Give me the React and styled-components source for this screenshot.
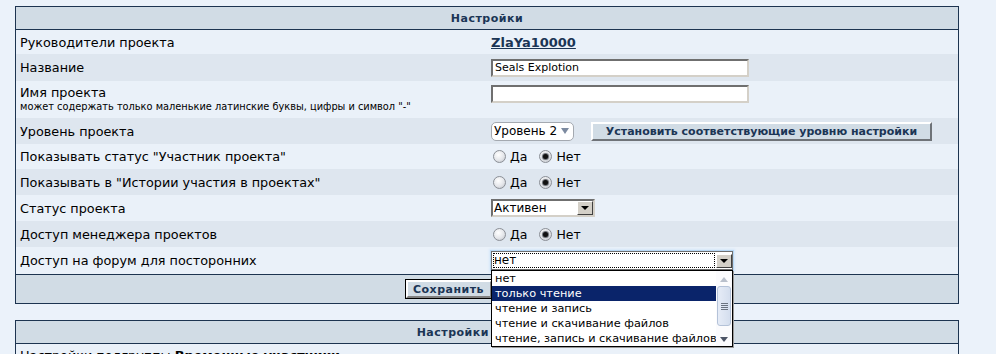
import React from 'react'
import styled, { createGlobalStyle, css } from 'styled-components'

const Global = createGlobalStyle`
    body {
        margin: 0;
        background: #ebf2fa;
        font-family: "DejaVu Sans", Verdana, sans-serif;
        color: #000;
    }
`

const Page = styled.div`
    padding: 6px 0 0 15px;
    display: flex;
    flex-direction: column;
    gap: 16px;
`

const Panel = styled.section`
    width: 944px;
    box-sizing: border-box;
    border: 1px solid #1d3450;
    border-bottom: ${p => (p.open ? 'none' : '1px solid #1d3450')};
`

const Header = styled.div`
    height: 22px;
    background: #d1dce5;
    border-bottom: 1px solid #1d3450;
    display: flex;
    align-items: center;
    justify-content: center;
    font-weight: bold;
    font-size: 11px;
    letter-spacing: 0.5px;
    color: #1b3555;
`

const Row = styled.div`
    display: grid;
    grid-template-columns: 475px 1fr;
    height: ${p => p.h}px;
    box-sizing: border-box;
    background: ${p => (p.alt ? '#dee6ef' : '#eaf1f9')};
    align-items: ${p => (p.top ? 'start' : 'center')};
    padding-top: ${p => (p.top ? 4 : 0)}px;
`

const Label = styled.div`
    padding-left: 4px;
    font-size: 12.8px;
    line-height: 15px;
    white-space: nowrap;
`

const Hint = styled.div`
    font-size: 9.8px;
    line-height: 13px;
`

const Value = styled.div`
    display: flex;
    align-items: center;
    gap: 17px;
    position: relative;
`

const UserLink = styled.a`
    font-size: 13px;
    font-weight: bold;
    color: #1b3555;
    text-decoration: underline;
`

const TextInput = styled.input`
    width: 258px;
    height: 18px;
    box-sizing: border-box;
    margin: 0;
    padding: 0 2px;
    border: 2px solid;
    border-color: #6f6f6f #d4d0c8 #d4d0c8 #6f6f6f;
    background: #fff;
    font-family: "DejaVu Sans", sans-serif;
    font-size: 11px;
    outline: none;
`

const RoundSelect = styled.div`
    width: 83px;
    height: 19px;
    box-sizing: border-box;
    border: 1px solid #a4a9b0;
    border-radius: 5px;
    background: #fff;
    display: flex;
    align-items: center;
    justify-content: space-between;
    padding: 0 4px 0 2px;
    font-size: 12px;
`

const SmallArrow = styled.span`
    width: 0;
    height: 0;
    border-left: 4px solid transparent;
    border-right: 4px solid transparent;
    border-top: 6px solid #7c8aa0;
`

const BlackArrow = styled.span`
    width: 0;
    height: 0;
    border-left: 4px solid transparent;
    border-right: 4px solid transparent;
    border-top: 4px solid #000;
`

const BevelButton = styled.button`
    height: ${p => p.h || 19}px;
    width: ${p => p.w}px;
    box-sizing: border-box;
    margin: 0;
    padding: 0;
    white-space: nowrap;
    background: #d1dce5;
    border: 2px solid;
    border-color: #ffffff #6f7378 #6f7378 #ffffff;
    ${p => p.framed && css`
        outline: 1px solid #000;
        border-color: #ffffff #808080 #808080 #ffffff;
    `}
    font-family: "DejaVu Sans", sans-serif;
    font-weight: bold;
    font-size: 11px;
    letter-spacing: ${p => (p.tight ? 0 : 0.5)}px;
    color: #1b3555;
`

const ClassicSelect = styled.div`
    width: ${p => p.w}px;
    height: ${p => p.h || 18}px;
    box-sizing: border-box;
    border: 2px solid;
    border-color: #6f6f6f #d4d0c8 #d4d0c8 #6f6f6f;
    background: #fff;
    display: flex;
    align-items: center;
    font-size: 12px;
    ${p => p.focused && css`
        border: 1px solid #6f6f6f;
        box-shadow: 0 0 0 1px #b6d7f5, 0 0 2px 2px #d6e8fa;
    `}
`

const SelectText = styled.span`
    flex: 1;
    padding-left: 1px;
    line-height: 14px;
    ${p => p.focused && css`
        margin: 0 1px;
        outline: 1px dotted #000;
        outline-offset: -1px;
        height: 15px;
    `}
`

const ArrowBox = styled.span`
    width: 16px;
    height: 14px;
    box-sizing: border-box;
    background: #d4d0c8;
    border: 1px solid;
    border-color: #fff #404040 #404040 #fff;
    display: flex;
    align-items: center;
    justify-content: center;
`

const Radios = styled.div`
    display: flex;
    align-items: center;
    padding-left: 2px;
    font-size: 12.5px;
`

const RadioItem = styled.label`
    display: flex;
    align-items: center;
    gap: 4px;
    margin-right: 12px;
`

const RadioDot = styled.span`
    width: 13px;
    height: 13px;
    box-sizing: border-box;
    border-radius: 50%;
    border: 1px solid #8b8f96;
    background: radial-gradient(circle at 40% 35%, #ffffff 0%, #e4e6ea 55%, #b9bdc4 100%);
    display: flex;
    align-items: center;
    justify-content: center;
    &::after {
        content: '';
        width: 5px;
        height: 5px;
        border-radius: 50%;
        background: ${p => (p.checked ? '#111' : 'transparent')};
        box-shadow: ${p => (p.checked ? '0 0 1px 1px #5d6168' : 'none')};
    }
`

const DropList = styled.div`
    position: absolute;
    left: 0;
    top: 19px;
    width: 242px;
    height: 77px;
    box-sizing: border-box;
    border: 1px solid #000;
    box-shadow: 1px 1px 0 #9a9a9a;
    background: #fff;
    display: flex;
    z-index: 5;
`

const Options = styled.div`
    flex: 1;
    min-width: 0;
    display: flex;
    flex-direction: column;
`

const Option = styled.div`
    height: 15px;
    line-height: 15px;
    padding-left: 3px;
    font-size: 11.3px;
    white-space: nowrap;
    overflow: hidden;
    background: ${p => (p.active ? '#0a246a' : 'transparent')};
    color: ${p => (p.active ? '#fff' : '#000')};
`

const Scroll = styled.div`
    width: 16px;
    flex: none;
    display: flex;
    flex-direction: column;
    align-items: center;
    background: #fbfbfd;
`

const ScrollArrow = styled.span`
    margin: 6px 0 4px;
    width: 0;
    height: 0;
    border-left: 4px solid transparent;
    border-right: 4px solid transparent;
    ${p => (p.up
        ? css`border-bottom: 5px solid #b9c0cc;`
        : css`border-top: 5px solid #4d5566; margin-top: auto;`)}
`

const Thumb = styled.div`
    width: 14px;
    height: 40px;
    box-sizing: border-box;
    border: 1px solid #b4c2d8;
    border-radius: 3px;
    background: linear-gradient(90deg, #e6ecf7, #d4deee);
    display: flex;
    flex-direction: column;
    align-items: center;
    justify-content: center;
    gap: 1px;
`

const Grip = styled.span`
    width: 7px;
    height: 1px;
    background: #6b7380;
`

const Footer = styled.div`
    height: 28px;
    border-top: 1px solid #1d3450;
    background: #d1dce5;
    display: flex;
    align-items: center;
    justify-content: center;
    padding-right: 77px;
`

const PlainRow = styled.div`
    padding: 4px 4px 0;
    font-size: 12.8px;
    background: #eaf1f9;
    height: 20px;
`

function Radio({ value }) {
    return (
        <Radios>
            <RadioItem><RadioDot checked={value === 'yes'} />Да</RadioItem>
            <RadioItem><RadioDot checked={value === 'no'} />Нет</RadioItem>
        </Radios>
    )
}

const forumOptions = [
    'нет',
    'только чтение',
    'чтение и запись',
    'чтение и скачивание файлов',
    'чтение, запись и скачивание файлов',
]

export default function App() {
    return (
        <Page>
            <Global />
            <Panel>
                <Header>Настройки</Header>
                <Row h={24}>
                    <Label>Руководители проекта</Label>
                    <Value><UserLink href="#">ZlaYa10000</UserLink></Value>
                </Row>
                <Row h={27} alt>
                    <Label>Название</Label>
                    <Value><TextInput defaultValue="Seals Explotion" /></Value>
                </Row>
                <Row h={37} top>
                    <Label>
                        Имя проекта
                        <Hint>может содержать только маленькие латинские буквы, цифры и символ "-"</Hint>
                    </Label>
                    <Value><TextInput defaultValue="" /></Value>
                </Row>
                <Row h={26} alt>
                    <Label>Уровень проекта</Label>
                    <Value>
                        <RoundSelect>Уровень 2 <SmallArrow /></RoundSelect>
                        <BevelButton w={341} tight>Установить соответствующие уровню настройки</BevelButton>
                    </Value>
                </Row>
                <Row h={25}>
                    <Label>Показывать статус "Участник проекта"</Label>
                    <Value><Radio value="no" /></Value>
                </Row>
                <Row h={26} alt>
                    <Label>Показывать в "Истории участия в проектах"</Label>
                    <Value><Radio value="no" /></Value>
                </Row>
                <Row h={26}>
                    <Label>Статус проекта</Label>
                    <Value>
                        <ClassicSelect w={104}>
                            <SelectText>Активен</SelectText>
                            <ArrowBox><BlackArrow /></ArrowBox>
                        </ClassicSelect>
                    </Value>
                </Row>
                <Row h={26} alt>
                    <Label>Доступ менеджера проектов</Label>
                    <Value><Radio value="no" /></Value>
                </Row>
                <Row h={27}>
                    <Label>Доступ на форум для посторонних</Label>
                    <Value>
                        <ClassicSelect w={242} h={19} focused>
                            <SelectText focused>нет</SelectText>
                            <ArrowBox><BlackArrow /></ArrowBox>
                        </ClassicSelect>
                        <DropList>
                            <Options>
                                {forumOptions.map((o, i) => (
                                    <Option key={o} active={i === 1}>{o}</Option>
                                ))}
                            </Options>
                            <Scroll>
                                <ScrollArrow up />
                                <Thumb><Grip /><Grip /><Grip /><Grip /></Thumb>
                                <ScrollArrow />
                            </Scroll>
                        </DropList>
                    </Value>
                </Row>
                <Footer>
                    <BevelButton framed w={86} h={18}>Сохранить</BevelButton>
                </Footer>
            </Panel>
            <Panel open>
                <Header>Настройки подгрупп</Header>
                <PlainRow>Настройки подгруппы <b>Временные участники</b></PlainRow>
            </Panel>
        </Page>
    )
}
